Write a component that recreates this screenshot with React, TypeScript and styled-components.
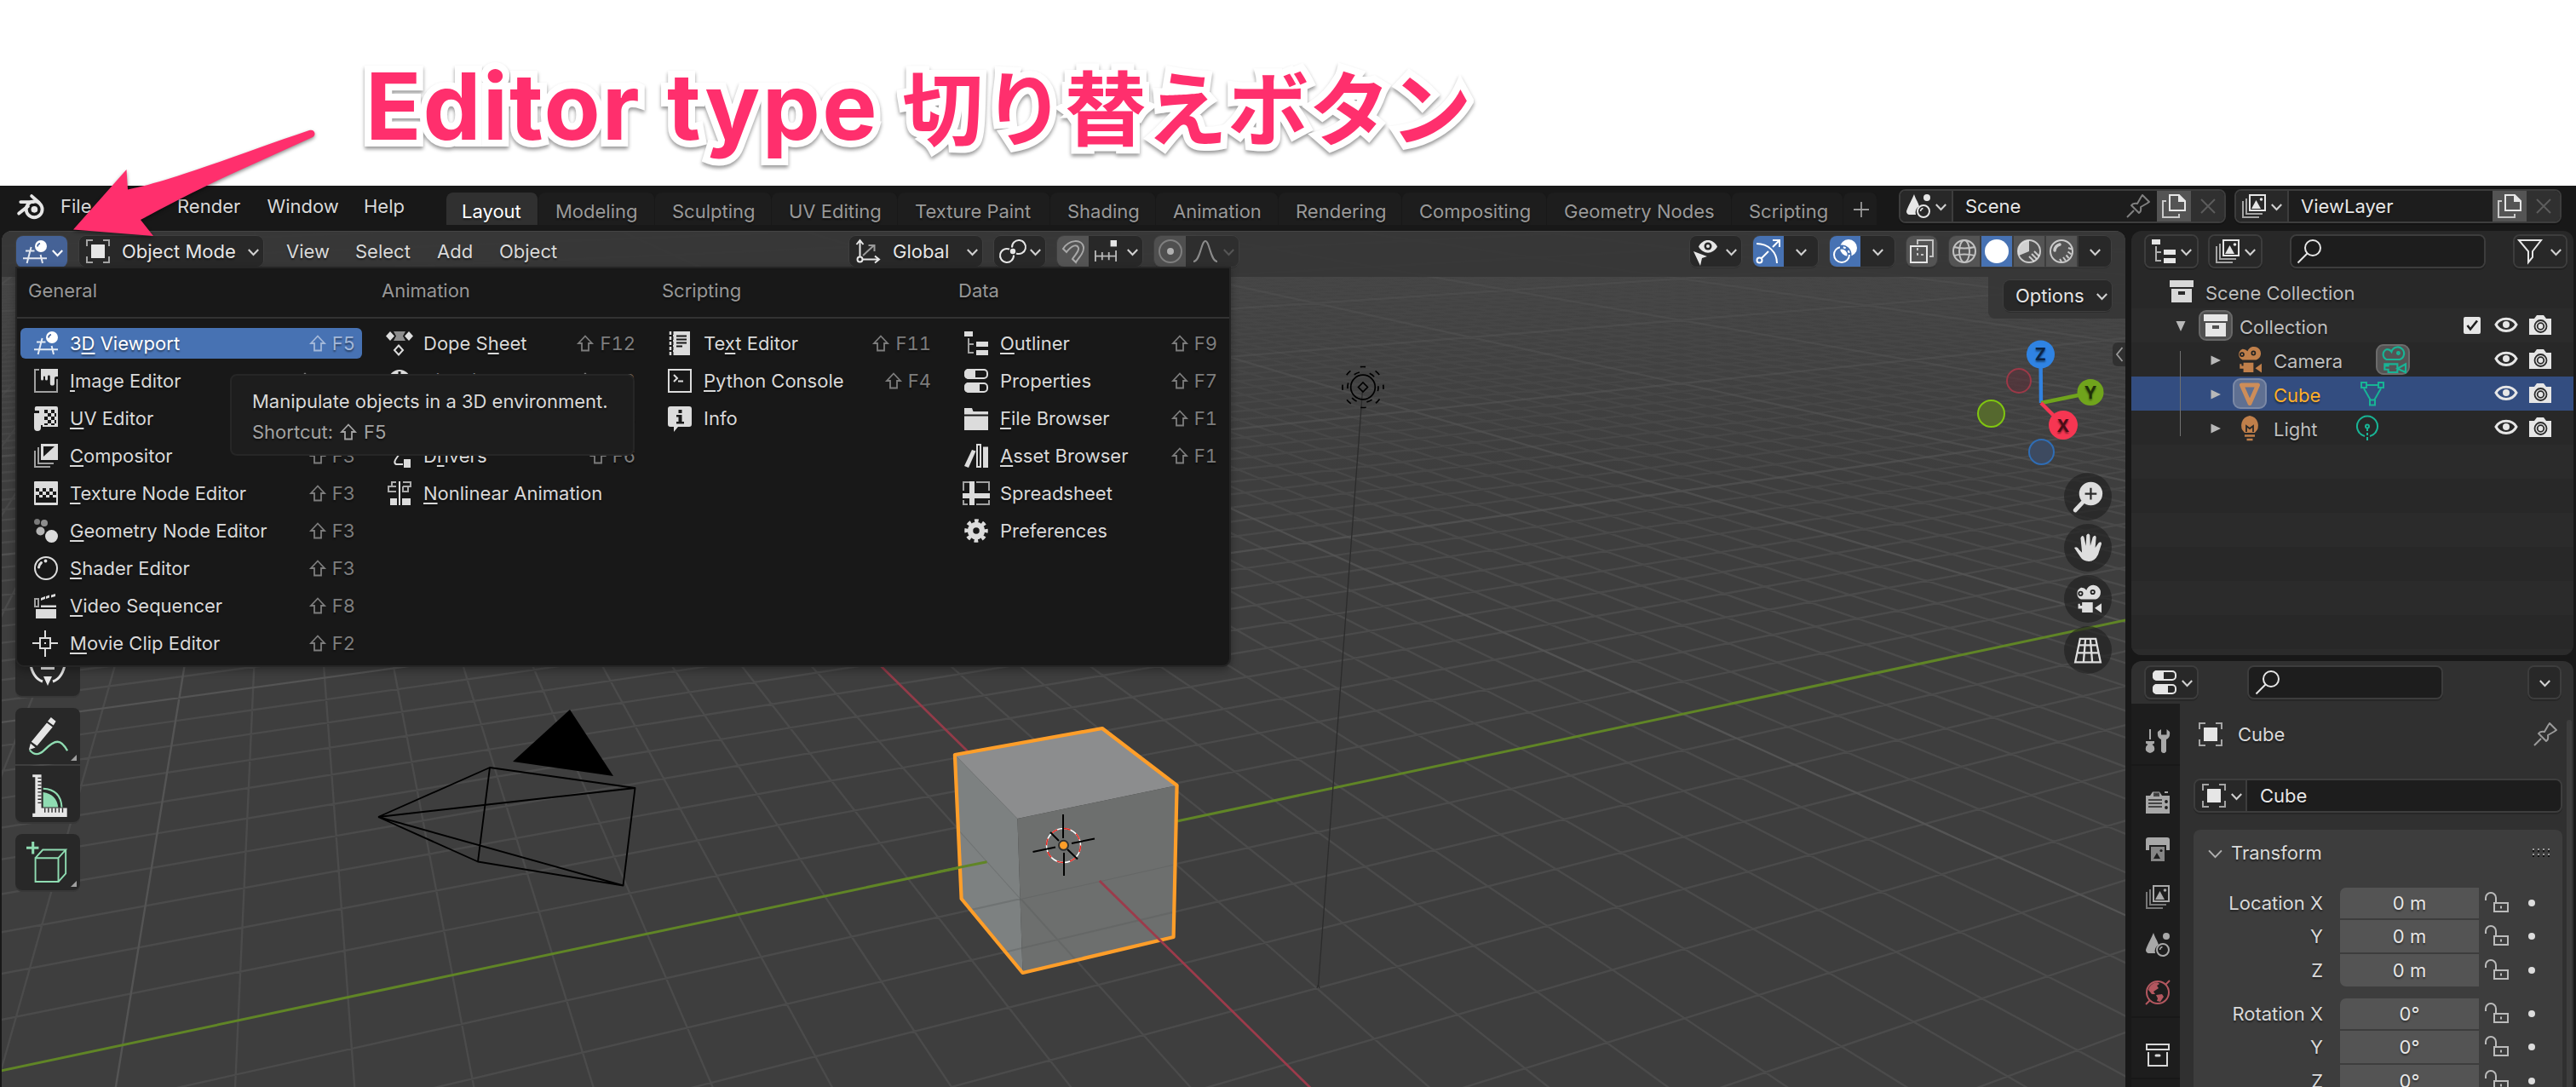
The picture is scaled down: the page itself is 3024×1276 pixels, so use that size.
import React from "react";
import styled, { createGlobalStyle, css } from "styled-components";

const Global = createGlobalStyle`
  *, *::before, *::after { box-sizing: border-box; }
  html, body { margin: 0; padding: 0; background: #fff; overflow: hidden; }
  body { font-family: Inter, "Noto Sans CJK JP", sans-serif; font-size: 22px; color: #d9d9d9; }
`;

/* ------------------------------------------------------------------ icons */

const S = { fill: "none", stroke: "currentColor", strokeWidth: 2 } as const;

const glyphs: Record<string, React.ReactNode> = {
  blender: (
    <g>
      <path d="M2 21 L12 13.2 M4 8.5 H18" stroke="currentColor" strokeWidth="3.6" strokeLinecap="round" fill="none" />
      <path d="M16 2 L24 9" stroke="currentColor" strokeWidth="3.6" strokeLinecap="round" fill="none" />
      <circle cx="18.8" cy="16.6" r="8.8" fill="none" stroke="currentColor" strokeWidth="3.6" />
      <circle cx="19" cy="16.6" r="3.6" fill="currentColor" />
    </g>
  ),
  view3d: (
    <g>
      <path d="M0 21.3H28M3 12.6H13.5M9.6 8L4.6 27M20.6 17L23 27" {...S} opacity="0.85" />
      <circle cx="21" cy="7" r="7" fill="currentColor" />
      <path d="M17 7.5a4 4 0 0 1 3-3.7" fill="none" stroke="#3d5f9b" strokeWidth="1.6" />
    </g>
  ),
  image: (
    <g fill="currentColor">
      <path d="M6 1H1V27H27V12" {...S} opacity="0.7" />
      <path d="M8 0H28V9h-2a2 2 0 0 0-2 2v6a2.6 2.6 0 0 1-5.2 0V9a1.4 1.4 0 0 0-2.800 0v3a1.5 1.5 0 0 1-3 0V9a1.500 1.500 0 0 0-2 0v3a1.500 1.500 0 0 1-3 0z" />
    </g>
  ),
  uv: (
    <g fill="currentColor">
      <path d="M3 0H26a2 2 0 0 1 2 2V24H10V22H8V25a3 3 0 0 1-8 0V8H6V5H1Q0 0 3 0z" />
      <path d="M12 4h4v4h-4zM20 4h4v4h-4zM16 8h4v4h-4zM24 8h2v4h-2zM12 12h4v4h-4zM20 12h4v4h-4zM16 16h4v4h-4zM24 16h2v4h-2zM12 20h4v2h-4zM20 20h4v2h-4z" fill="#181818" />
    </g>
  ),
  compositor: (
    <g>
      <path d="M1 8V27H19M5 4V23H23" {...S} opacity="0.7" />
      <path d="M8 0H28V19H8z" fill="currentColor" />
      <path d="M11 3H24L11 15z" fill="#181818" />
    </g>
  ),
  texture: (
    <g>
      <rect width="28" height="28" rx="1" fill="currentColor" />
      <path d="M2 8h4v4H2zM10 8h4v4h-4zM18 8h4v4h-4zM6 12h4v4H6zM14 12h4v4h-4zM22 12h4v4h-4zM2 16h4v2H2zM10 16h4v2h-4zM18 16h4v2h-4zM2 18h24v7H2z" fill="#181818" />
      <path d="M6 16h4v3H6zM14 16h4v3h-4zM22 16h4v3h-4z" fill="currentColor" />
    </g>
  ),
  geonodes: (
    <g fill="currentColor">
      <circle cx="3.500" cy="3.500" r="3.500" opacity="0.5" />
      <circle cx="12" cy="5" r="4" opacity="0.6" />
      <circle cx="7.500" cy="14.500" r="5" opacity="0.8" />
      <circle cx="20.500" cy="20.500" r="7.500" />
    </g>
  ),
  shader: (
    <g>
      <circle cx="14" cy="14" r="13" {...S} />
      <path d="M5.500 13a9 9 0 0 1 3-5.500" {...S} strokeWidth="3" strokeLinecap="round" />
      <circle cx="13.500" cy="5.500" r="1.900" fill="currentColor" />
    </g>
  ),
  video: (
    <g fill="currentColor">
      <rect x="1" y="6" width="4" height="9" {...S} opacity="0.7" />
      <path d="M8 5l5-2v3l-5 2zM14 3l4-1.500v3L14 6zM20 1.500L25 0v3l-5 1.500zM8 13.500h18v2.500H8zM2 18h24v11H2z" />
    </g>
  ),
  clip: (
    <g {...S}>
      <path d="M-2 14H7M19 14H28M13 -1V7M13 21V30" />
      <rect x="7" y="8" width="12" height="12" />
      <rect x="12" y="13" width="2" height="2" fill="currentColor" stroke="none" />
    </g>
  ),
  dope: (
    <g fill="currentColor">
      <path d="M3 0l5 5.500-5 5.500-5-5.500zM25 0l5 5.500-5 5.500-5-5.500z" />
      <path d="M7 0h14l-3 5.500 3 5.500H7l3-5.500z" opacity="0.6" />
      <path d="M13 16.500l5 5.500-5 5.500-5-5.500z" {...S} />
    </g>
  ),
  timeline: (
    <g>
      <circle cx="14" cy="14" r="13" fill="currentColor" />
      <path d="M14 3v11l6-6" fill="none" stroke="#181818" strokeWidth="3" />
    </g>
  ),
  drivers: (
    <g>
      <path d="M4 1C12 1 18 5 14 12C10 17 6 22 10 24H18" {...S} />
      <rect x="19" y="18" width="8" height="10" fill="currentColor" />
    </g>
  ),
  nla: (
    <g>
      <path d="M10 1H5V6M10 6H1V12H10M18 1H27V6H18M18 6V12H24V6" {...S} opacity="0.75" />
      <path d="M14 0V28" {...S} />
      <path d="M3 20h8v8H3zM17 20h10v8H17z" fill="currentColor" />
    </g>
  ),
  text: (
    <g>
      <path d="M6 0H26V28H6z" fill="currentColor" />
      <path d="M3 0V28" stroke="currentColor" strokeWidth="2.500" strokeDasharray="4 2" />
      <path d="M6 0V28" stroke="#181818" strokeWidth="1" strokeDasharray="4 2" />
      <path d="M10 5.500H22M10 9.500H22M10 13.500H22M10 17.500H17" stroke="#181818" strokeWidth="2" />
    </g>
  ),
  console: (
    <g {...S}>
      <rect x="1" y="1" width="26" height="26" />
      <path d="M7 7l4 4-4 4M12 14.500h6" />
    </g>
  ),
  info: (
    <g>
      <path d="M3 0H25a3 3 0 0 1 3 3V21a3 3 0 0 1-3 3H12L7 30V24H3a3 3 0 0 1-3-3V3a3 3 0 0 1 3-3z" fill="currentColor" />
      <path d="M12.500 4h4v4h-4zM10 10h6.500v8H19v2.500H10V18h2.500v-5.500H10z" fill="#181818" />
    </g>
  ),
  outliner: (
    <g>
      <path d="M0 0h10v6H0zM14 12h14v6H14zM14 22h14v6H14z" fill="currentColor" />
      <path d="M5 8V25H11M5 15H11" {...S} opacity="0.7" />
    </g>
  ),
  properties: (
    <g>
      <rect x="1" y="1" width="26" height="10" rx="4" {...S} />
      <path d="M5 0H13V12H5a5 5 0 0 1-5-5V5a5 5 0 0 1 5-5z" fill="currentColor" />
      <rect x="1" y="17" width="26" height="10" rx="4" {...S} />
      <path d="M5 16H18V28H5a5 5 0 0 1-5-5V21a5 5 0 0 1 5-5z" fill="currentColor" />
    </g>
  ),
  file: <path d="M0 2H9l1.500 4H28V9.500H0zM0 11.500H28V28H0z" fill="currentColor" />,
  asset: (
    <g fill="currentColor">
      <path d="M9 7l4.500 1.500L5 28 0 26z" />
      <path d="M15 1h4v26h-4z" {...S} />
      <path d="M22 3.500h6V28h-6z" />
    </g>
  ),
  sheet: (
    <g>
      <path d="M-1 11V1H6M14 1H29V11M-1 22V27H4M14 27H29V22" {...S} opacity="0.7" />
      <path d="M6 0h6v28H6zM-2 14H30v6H-2z" fill="currentColor" />
    </g>
  ),
  prefs: (
    <g>
      <circle cx="14" cy="14" r="7" fill="none" stroke="currentColor" strokeWidth="6.500" />
      <circle cx="14" cy="14" r="11.500" fill="none" stroke="currentColor" strokeWidth="4.500" strokeDasharray="4.600 4.430" strokeDashoffset="2.300" />
    </g>
  ),
  object: (
    <g>
      <path d="M1 8V1H8M20 1H27V8M27 20V27H20M8 27H1V20" {...S} opacity="0.65" />
      <rect x="6" y="6" width="16" height="16" rx="0.500" fill="currentColor" />
    </g>
  ),
  orient: (
    <g {...S}>
      <path d="M4.500 20V1M0.500 6l4-5 4 5M8 23.500H27M22 19.500l5 4-5 4" />
      <circle cx="4.500" cy="23.500" r="3" />
      <path d="M8 19L21 7M14.500 7H21.500V14" opacity="0.6" />
    </g>
  ),
  pivot: (
    <g {...S}>
      <path d="M13 9.500a8 8 0 1 1 5 7" />
      <path d="M15 18.500a8 8 0 1 1-5-7" />
      <circle cx="14" cy="14" r="2.200" fill="currentColor" />
    </g>
  ),
  magnet: <path d="M2 11C9 0 24-1 26 9C27 17 20 21 17 27L13 23C16 18 21 14 20 10C18 5 12 7 6 15z" {...S} />,
  snapinc: (
    <g {...S}>
      <path d="M1 13V27M27 13V27M9.500 15V25M18 15V25M1 20H27" opacity="0.75" />
      <rect x="20" y="0" width="8" height="8" fill="currentColor" stroke="none" />
    </g>
  ),
  propedit: (
    <g>
      <circle cx="14" cy="14" r="13" {...S} opacity="0.5" />
      <circle cx="14" cy="14" r="4" fill="currentColor" />
    </g>
  ),
  falloff: <path d="M0 26C8 26 9 2 14 2S20 26 28 26" {...S} />,
  eyecursor: (
    <g>
      <path d="M6 8.500C11-1.500 23-1.500 28 8.500C23 18 11 18 6 8.500z" fill="currentColor" />
      <circle cx="17" cy="8" r="4.500" fill="#282828" />
      <circle cx="17" cy="8" r="2" fill="currentColor" />
      <path d="M0 14L16 20 10 22 8 31z" fill="currentColor" />
    </g>
  ),
  gizmo: (
    <g {...S}>
      <path d="M0 5C14 5 24 15 24 28M6 22L14 14M19 9L27 1M19 1H27V9" />
      <circle cx="3.500" cy="24.500" r="3" />
    </g>
  ),
  overlay: (
    <g>
      <circle cx="18" cy="10" r="10" fill="currentColor" />
      <circle cx="10" cy="18" r="9" fill="none" stroke="#4772b3" strokeWidth="5" />
      <circle cx="10" cy="18" r="9" {...S} strokeDasharray="40 4 3 4 3 4" />
    </g>
  ),
  xray: (
    <g {...S}>
      <path d="M9 6V1H27V20H23" opacity="0.75" />
      <rect x="1" y="8" width="19" height="19" />
      <path d="M9 10V18H18" strokeDasharray="3 3" strokeWidth="1.500" />
    </g>
  ),
  wire: (
    <g {...S} opacity="0.75">
      <circle cx="14" cy="14" r="13" />
      <ellipse cx="14" cy="14" rx="6" ry="13" />
      <path d="M2 9C10 11 18 11 26 9M2 19C10 17 18 17 26 19" />
    </g>
  ),
  solid: <circle cx="14" cy="14" r="14" fill="currentColor" />,
  material: (
    <g>
      <circle cx="14" cy="14" r="13" {...S} opacity="0.8" />
      <path d="M14 14V1A13 13 0 0 0 1 14q0 3 1 5z" fill="currentColor" opacity="0.85" />
      <path d="M14 20l6 6M17 17l6 6M20 14l6 6" {...S} opacity="0.8" />
    </g>
  ),
  rendered: (
    <g {...S} opacity="0.8">
      <circle cx="14" cy="14" r="13" />
      <path d="M6 13a8 8 0 0 1 6-7" strokeWidth="3.500" strokeLinecap="round" />
      <path d="M12 23l2 3M16 21l3 4M19.500 18.500l3 3.500M21.500 14.500l4 3M22 10l4 1.500" />
    </g>
  ),
  scene: (
    <g fill="currentColor">
      <path d="M9 0C10 4 14 10 15 14A9 9 0 0 0 11 24H3Q0 23 0 20C2 14 7 5 9 0z" />
      <circle cx="24" cy="4" r="4" />
      <circle cx="20" cy="20" r="7" {...S} />
      <path d="M16.500 20a4 4 0 0 1 3-3.500" {...S} strokeWidth="1.500" />
    </g>
  ),
  viewlayer: (
    <g>
      <path d="M1 8V27H20M5 5V23H24" {...S} opacity="0.65" />
      <rect x="9" y="1" width="18" height="18" {...S} />
      <path d="M11 17L16.500 7 22 17z" fill="currentColor" />
      <circle cx="22.500" cy="6" r="1.800" fill="currentColor" />
    </g>
  ),
  pin: <path d="M1 27L9 19M6 13L15 22Q18 20 17 15L24 11 27 9 19 1 17 4 13 11Q8 10 6 13z" {...S} strokeLinejoin="round" />,
  copy: (
    <g>
      <path d="M5 8H1V27H20V23" {...S} opacity="0.8" />
      <path d="M9 1H20L27 8V19H9z" {...S} />
      <path d="M19 0V9H28z" fill="currentColor" />
    </g>
  ),
  close: <path d="M6 6L22 22M22 6L6 22" {...S} />,
  search: (
    <g {...S}>
      <circle cx="18" cy="10" r="9" />
      <path d="M11.500 16.500L0.500 27.500" />
    </g>
  ),
  filter: <path d="M1 1H27L17 14V21L12 27V14z" {...S} />,
  archive: (
    <g fill="currentColor">
      <path d="M0 1H28V9H0z" />
      <path d="M2 11H26V27H2zM10 14v4h8v-4z" fillRule="evenodd" />
    </g>
  ),
  archiveline: (
    <g {...S}>
      <rect x="1" y="2" width="26" height="6" />
      <path d="M3 11V27H25V11" />
      <rect x="10.500" y="13.500" width="7" height="3" rx="1.500" fill="currentColor" stroke="none" />
    </g>
  ),
  check: (
    <g>
      <rect x="4" y="4" width="20" height="20" rx="2" fill="currentColor" />
      <path d="M8.500 14l3.500 4.500L20 8.500" fill="none" stroke="#1d1d1d" strokeWidth="2.600" />
    </g>
  ),
  eye: (
    <g>
      <path d="M2 13C7 4 21 4 26 13C21 23 7 23 2 13z" {...S} strokeWidth="3" />
      <circle cx="14" cy="13" r="4" fill="currentColor" />
    </g>
  ),
  photo: (
    <g>
      <path d="M1 6H7L10 2H18L21 6H27V25H1z" fill="currentColor" />
      <circle cx="14.500" cy="15" r="7" fill="none" stroke="#2b2b2b" strokeWidth="1.800" />
      <circle cx="14.500" cy="15" r="3.800" fill="none" stroke="#2b2b2b" strokeWidth="1.800" />
    </g>
  ),
  movie: (
    <g>
      <path d="M7 4a6.500 6.500 0 0 0 0 12H22a7.500 7.500 0 1 0-9.500-9.500A6.500 6.500 0 0 0 7 4z" fill="currentColor" transform="translate(0 -1.500)" />
      <circle cx="6.500" cy="8.500" r="1.900" fill="none" stroke="#222" strokeWidth="1.600" />
      <circle cx="19" cy="7" r="1.900" fill="none" stroke="#222" strokeWidth="1.600" />
      <path d="M4 19h2v2h2v-3.500H19V28H8v-4H4zM21 23.500l7-5v10z" fill="currentColor" />
    </g>
  ),
  movieline: (
    <g {...S}>
      <path d="M7 4.500a6 6 0 0 0 0 11H21.500a7 7 0 1 0-9-8.500A6 6 0 0 0 7 4.500z" transform="translate(0 -1.500)" />
      <circle cx="20" cy="7" r="1.300" />
      <path d="M9 19H19V28H9V25H5V19H7V21H9zM19 24L28 19V28z" />
    </g>
  ),
  mesh: <path d="M4.500 4H23.500L14 25.500z" fill="none" stroke="currentColor" strokeWidth="5" strokeLinejoin="round" />,
  meshdata: (
    <g {...S}>
      <path d="M6 4H22M4 8L12 22M24 8L16 22" />
      <rect x="1" y="1" width="6" height="6" />
      <rect x="21" y="1" width="6" height="6" />
      <rect x="11" y="21.500" width="6" height="6" />
    </g>
  ),
  bulb: (
    <g>
      <path d="M14 0A11.500 11.500 0 0 1 20 20H8A11.500 11.500 0 0 1 14 0z" fill="currentColor" />
      <path d="M10 19V12l4 3 4-3v7" fill="none" stroke="#282828" strokeWidth="1.800" />
      <path d="M8 23.500H20M10.500 28H17.500" stroke="currentColor" strokeWidth="2.600" />
    </g>
  ),
  lightdata: (
    <g {...S}>
      <path d="M11 24A12 12 0 1 1 17 24" />
      <circle cx="14" cy="12.500" r="2" />
      <path d="M14 14.500V18M14 20V23M14 25V29" />
    </g>
  ),
  tool: (
    <g fill="currentColor">
      <path d="M4 0h2v12H4zM0 14h10v2.500L7.500 18Q11 20 10 25 5 31 0 25-1 20 2.500 18L0 16.500z" />
      <path d="M14 3Q13 10 18 12V26a3.200 3.200 0 0 0 6 0V12Q29 10 28 3L24.500 0V6.500H18V0z" />
    </g>
  ),
  renderprop: (
    <g>
      <path d="M0 7H5L8 2.500H16L19 7H28V28H0z" fill="currentColor" />
      <path d="M10 4.500h5v2.500h-5zM3 12H19M3 16H19M3 20H19" stroke="#444" strokeWidth="2" fill="#1d1d1d" />
      <circle cx="24" cy="14" r="1.900" fill="#1d1d1d" />
      <circle cx="24" cy="21" r="1.900" fill="#1d1d1d" />
      <path d="M22 3h4" stroke="currentColor" strokeWidth="2" />
    </g>
  ),
  output: (
    <g>
      <path d="M3 0H25a3 3 0 0 1 3 3V15H24V9H4V15H0V3a3 3 0 0 1 3-3z" fill="currentColor" />
      <path d="M6 11H22V28H6z" fill="currentColor" opacity="0.75" />
      <path d="M9 25L13 18l4 7z" fill="#1d1d1d" />
      <circle cx="18" cy="15.500" r="1.600" fill="#1d1d1d" />
    </g>
  ),
  world: (
    <g>
      <circle cx="14" cy="14" r="13" {...S} />
      <path d="M23 5l5-5M0 28l5-5" {...S} />
      <path d="M4 8C8 2 14 1 16 4L13 6 15 9 9 13 11 16 7 16 3 11zM12 17L19 16 21 19 17 25 13 24 14 21z" fill="currentColor" />
    </g>
  ),
  lock: (
    <g {...S} opacity="0.75">
      <path d="M1 11V8a6 6 0 0 1 12 0V14" />
      <rect x="11" y="14" width="16" height="10" />
      <path d="M19 17.500v3" />
    </g>
  ),
  dots: (
    <g>
      {[0, 6, 12, 18].map((x) => (
        <g key={x}>
          <path d={`M${x + 4} 9h2v2h-2zM${x + 4} 15h2v2h-2z`} fill="#999" />
          <path d={`M${x + 4} 11h2v2h-2zM${x + 4} 17h2v2h-2z`} fill="#111" />
        </g>
      ))}
    </g>
  ),
  zoomin: (
    <g>
      <circle cx="17" cy="11" r="12" fill="currentColor" />
      <path d="M17 5V17M11 11H23" stroke="#2c2c2c" strokeWidth="2" />
      <path d="M9.500 19L1 28" stroke="currentColor" strokeWidth="4.200" strokeLinecap="round" />
    </g>
  ),
  hand: (
    <path
      d="M0 14Q3 12 5 16L8 19 6.500 4Q8 0 10 3L12 12 12.500 1Q14.500-2 16 1L16.500 12 19 3Q21.500 0 22.500 3L21.500 14 25 9Q28 7 28 10L24.500 21Q21 28 15 28 9 28 6 23z"
      fill="currentColor"
    />
  ),
  persp: <path d="M6 2.500H22L27 26.500H1zM4.500 9H23.500M3 17H25M11.500 2.500L9.500 26.500M16.500 2.500L18.500 26.500" fill="none" stroke="currentColor" strokeWidth="2" />,
  pen: (
    <g>
      <path d="M30 3L36 8 33 13 26 8zM25 10L32 15 13 38 6 33zM5 35L11 40 3 43z" fill="#e6e6e6" />
      <path d="M4 43Q12 53 22 43T38 33Q44 33 50 44" fill="none" stroke="#8fdcb2" strokeWidth="2.400" />
    </g>
  ),
  measure: (
    <g transform="translate(1 2)">
      <path d="M4 2H14V40H43V50H4V46H7V5H4z" fill="#e6e6e6" />
      <path d="M14 6h-4M14 10h-4M14 14h-4M14 18h-4M14 22h-4M14 26h-4M14 30h-4M14 34h-4M18 40v5M22 40v5M26 40v5M30 40v5M34 40v5M38 40v5" stroke="#282828" strokeWidth="1.300" />
      <path d="M16 22Q31 24 33 39H16z" fill="#8fdcb2" />
      <path d="M16 18Q36 19 37 39" fill="none" stroke="#8fdcb2" strokeWidth="2" />
    </g>
  ),
  addcube: (
    <g fill="none" stroke="#8fdcb2" strokeWidth="2">
      <path d="M8 1V16M0 8.500H15" strokeWidth="3.200" />
      <path d="M11 21H39V50H11zM11 21L20 11H48L39 21M48 11V40L39 50" />
    </g>
  ),
  transform: (
    <g>
      <rect x="18" y="14" width="16" height="14" fill="#e6e6e6" />
      <path d="M5 18Q8 38 20 42M47 18Q44 38 32 42" fill="none" stroke="#e6e6e6" strokeWidth="3" />
      <path d="M21 36H31L26 47zM4 14l7 2-3 6zM48 14l-7 2 3 6z" fill="#e6e6e6" />
    </g>
  ),
};

const IconSvg = styled.svg<{ $c?: string; $ml?: number; $mt?: number }>`
  display: block;
  flex: none;
  overflow: visible;
  color: ${(p) => p.$c ?? "#e6e6e6"};
  margin-left: ${(p) => p.$ml ?? 0}px;
  margin-top: ${(p) => p.$mt ?? 0}px;
`;

function Icon({ n, s = 28, box = 28, c, ml }: { n: string; s?: number; box?: number; c?: string; ml?: number }) {
  return (
    <IconSvg width={s} height={s} viewBox={`0 0 ${box} ${box}`} $c={c} $ml={ml}>
      {glyphs[n]}
    </IconSvg>
  );
}

function Chevron({ w = 13, ml = 0, c = "#d0d0d0" }: { w?: number; ml?: number; c?: string }) {
  return (
    <IconSvg width={w} height={(w * 8) / 13} viewBox="0 0 13 8" $c={c} $ml={ml} $mt={2}>
      <path d="M0.800 1L6.500 7 12.200 1" {...S} strokeWidth={w > 13 ? 1.5 : 2.1} />
    </IconSvg>
  );
}

/* ------------------------------------------------------- window structure */

const Page = styled.div`
  position: relative;
  width: 3024px;
  height: 1276px;
  overflow: hidden;
  background: #fff;
`;

const Caption = styled.header`
  display: flex;
  align-items: baseline;
  height: 218px;
  padding: 53px 0 0 429px;
`;

const Word = styled.span<{ $size: number; $w: number; $track?: number; $jp?: boolean }>`
  flex: none;
  width: ${(p) => p.$w}px;
  white-space: nowrap;
  font-family: ${(p) => (p.$jp ? '"Noto Sans CJK JP", Inter' : 'Inter, "Noto Sans CJK JP"')}, sans-serif;
  font-weight: 700;
  font-size: ${(p) => p.$size}px;
  line-height: 140px;
  letter-spacing: ${(p) => p.$track ?? 0}px;
  color: #ff2f6d;
  -webkit-text-stroke: 16px #fff;
  paint-order: stroke fill;
  stroke-linejoin: round;
  filter: drop-shadow(0 3px 2px rgba(0, 0, 0, 0.4));
`;

const ArrowLayer = styled.svg`
  position: absolute;
  left: 0;
  top: 0;
  z-index: 20;
  filter: drop-shadow(0 2px 2px rgba(0, 0, 0, 0.45));
`;

const Window = styled.main`
  display: flex;
  flex-direction: column;
  height: 1058px;
  background: #181818;
  text-shadow: 0 2px 2px rgba(0, 0, 0, 0.45);
`;

const TopBar = styled.nav`
  display: flex;
  align-items: flex-start;
  height: 53px;
  flex: none;
`;

const Logo = styled.div`
  width: 71px;
  padding: 10px 0 0 20px;
`;

const MenuWord = styled.span<{ $w: number }>`
  width: ${(p) => p.$w}px;
  flex: none;
  line-height: 48px;
  white-space: nowrap;
`;

const Tab = styled.div<{ $w: number; $active?: boolean }>`
  width: ${(p) => p.$w}px;
  flex: none;
  height: 38px;
  margin-top: 8px;
  padding: 3px 0 0 ${(p) => (p.$active ? 18 : 20)}px;
  line-height: 38px;
  white-space: nowrap;
  border-radius: 8px 8px 0 0;
  border-right: 1px solid #181818;
  color: ${(p) => (p.$active ? "#fff" : "#999")};
  background: ${(p) => (p.$active ? "#303030" : "#1d1d1d")};
`;

const Body = styled.div`
  display: flex;
  flex: 1;
  gap: 7px;
  padding-left: 2px;
`;

/* shared control shell */
const Group = styled.div<{ $ml?: number; $h?: number; $mt?: number; $line?: boolean }>`
  display: flex;
  flex: none;
  overflow: hidden;
  height: ${(p) => p.$h ?? 36}px;
  margin-left: ${(p) => p.$ml ?? 0}px;
  margin-top: ${(p) => p.$mt ?? 0}px;
  border-radius: 8px;
  box-shadow: 0 0 0 ${(p) => (p.$line ? 0 : 1)}px #3f3f3f, 0 2px 0 rgba(0, 0, 0, 0.18);
  ${(p) => p.$line && css`border: 2px solid #3d3d3d;`}
`;

const Seg = styled.div<{ $w: number; $bg?: string; $pad?: number; $center?: boolean; $sep?: boolean; $fg?: string }>`
  display: flex;
  align-items: center;
  justify-content: ${(p) => (p.$center ? "center" : "flex-start")};
  flex: none;
  width: ${(p) => p.$w}px;
  padding-left: ${(p) => p.$pad ?? 0}px;
  background: ${(p) => p.$bg ?? "#282828"};
  color: ${(p) => p.$fg ?? "#e6e6e6"};
  white-space: nowrap;
  ${(p) => p.$sep && css`border-right: 2px solid #3d3d3d;`}
`;

const Txt = styled.span<{ $w: number; $ml?: number }>`
  flex: none;
  width: ${(p) => p.$w}px;
  margin-left: ${(p) => p.$ml ?? 0}px;
  white-space: nowrap;
`;

/* ---------------------------------------------------------------- viewport */

const ViewportArea = styled.section`
  position: relative;
  width: 2493px;
  flex: none;
  overflow: hidden;
  border-radius: 12px 12px 0 0;
  background: #3d3d3d;
`;

const SceneSvg = styled.svg`
  position: absolute;
  inset: 0;
`;

const ViewHeader = styled.div`
  position: relative;
  display: flex;
  align-items: flex-start;
  height: 54px;
  padding: 5px 0 0 17px;
  background: rgba(54, 54, 54, 0.88);
  border-top: 1px solid #444;
`;

const HeaderWord = styled.span<{ $w: number }>`
  width: ${(p) => p.$w}px;
  flex: none;
  line-height: 36px;
`;

const OptionsWrap = styled.div`
  position: relative;
  display: flex;
  width: 161px;
  height: 49px;
  margin-left: auto;
  padding: 4px 0 0 18px;
  background: rgba(54, 54, 54, 0.88);
  border-radius: 0 0 0 8px;
`;

const Toolbar = styled.div`
  position: absolute;
  left: 16px;
  top: 480px;
  width: 76px;
  display: flex;
  flex-direction: column;
  gap: 14px;
`;

const ToolGroup = styled.div`
  display: flex;
  flex-direction: column;
  gap: 2px;
  border-radius: 8px;
  overflow: hidden;
  box-shadow: 0 2px 0 #383838;
`;

const ToolButton = styled.div<{ $more?: boolean }>`
  position: relative;
  display: flex;
  justify-content: center;
  align-items: center;
  height: 66px;
  background: #282828;
  &::after {
    content: "";
    display: ${(p) => (p.$more ? "block" : "none")};
    position: absolute;
    right: 4px;
    bottom: 4px;
    border-left: 7px solid transparent;
    border-bottom: 7px solid #a0a0a0;
  }
`;

const NavStack = styled.div`
  position: absolute;
  left: 2421px;
  top: 284px;
  display: flex;
  flex-direction: column;
  gap: 4px;
`;

const NavButton = styled.div`
  display: flex;
  align-items: center;
  justify-content: center;
  width: 56px;
  height: 56px;
  border-radius: 50%;
  background: rgba(30, 30, 30, 0.62);
`;

const SideTab = styled.div`
  position: absolute;
  right: 0;
  top: 131px;
  width: 15px;
  height: 28px;
  border-radius: 6px 0 0 6px;
  background: #303030;
  display: flex;
  align-items: center;
  padding-left: 3px;
`;

/* ground plane projection for the default perspective view */
const TH = (65.08 * Math.PI) / 180;
const PH = (62.85 * Math.PI) / 180;
const FOCAL = 1760;
const DIST = 18.2;

function project(x: number, y: number, z = 0): [number, number] {
  const r = x * Math.cos(TH) + y * Math.sin(TH);
  const u = -x * Math.cos(PH) * Math.sin(TH) + y * Math.cos(PH) * Math.cos(TH) + z * Math.sin(PH);
  const b = x * Math.sin(PH) * Math.sin(TH) - y * Math.sin(PH) * Math.cos(TH) + z * Math.cos(PH);
  const k = FOCAL / (DIST - b);
  return [1248.5 + r * k, 992.3 - u * k];
}

const fmt = (p: [number, number]) => `${p[0].toFixed(1)} ${p[1].toFixed(1)}`;
const DX = Math.sin(PH) * Math.sin(TH);
const DY = Math.sin(PH) * Math.cos(TH);

function gridPath(extent: number, step: number, keep: (i: number) => boolean) {
  let d = "";
  for (let i = -extent; i <= extent; i += step) {
    if (!keep(i)) continue;
    const yMin = Math.max(-extent, (2 - DIST + DX * i) / DY);
    if (yMin < extent) d += `M${fmt(project(i, yMin))}L${fmt(project(i, extent))}`;
    const xMax = Math.min(extent, (DIST + DY * i - 2) / DX);
    if (xMax > -extent) d += `M${fmt(project(-extent, i))}L${fmt(project(xMax, i))}`;
  }
  return d;
}

const MINOR = gridPath(110, 1, (i) => i % 10 !== 0);
const MAJOR = gridPath(400, 10, (i) => i !== 0);
const SUNK = [project(-1, -1), project(1, -1), project(1, 1), project(1, 1, -1), project(1, -1, -1), project(-1, -1, -1)]
  .map((p) => p.join(","))
  .join(" ");

function SceneDrawing() {
  return (
    <SceneSvg width="2493" height="1005" viewBox="2 271 2493 1005">
      <defs>
        <linearGradient id="fade" x1="0" y1="271" x2="0" y2="700" gradientUnits="userSpaceOnUse">
          <stop offset="0" stopColor="#fff" stopOpacity="0.25" />
          <stop offset="0.350" stopColor="#fff" stopOpacity="0.5" />
          <stop offset="1" stopColor="#fff" stopOpacity="1" />
        </linearGradient>
        <linearGradient id="fadeMajor" x1="0" y1="271" x2="0" y2="800" gradientUnits="userSpaceOnUse">
          <stop offset="0" stopColor="#fff" stopOpacity="0.35" />
          <stop offset="1" stopColor="#fff" stopOpacity="1" />
        </linearGradient>
        <linearGradient id="haze" x1="0" y1="271" x2="0" y2="560" gradientUnits="userSpaceOnUse">
          <stop offset="0" stopColor="#454545" />
          <stop offset="1" stopColor="#3e3e3e" />
        </linearGradient>
        <mask id="minorMask" maskUnits="userSpaceOnUse" x="0" y="271" width="2500" height="1010">
          <rect x="0" y="271" width="2500" height="1010" fill="url(#fade)" />
        </mask>
        <mask id="majorMask" maskUnits="userSpaceOnUse" x="0" y="271" width="2500" height="1010">
          <rect x="0" y="271" width="2500" height="1010" fill="url(#fadeMajor)" />
        </mask>
        <clipPath id="sunk">
          <polygon points={SUNK} />
        </clipPath>
      </defs>
      <rect x="2" y="271" width="2493" height="1005" fill="url(#haze)" />
      <g mask="url(#minorMask)">
        <path d={MINOR} stroke="#4b4b4b" strokeWidth="2.400" fill="none" />
      </g>
      <g mask="url(#majorMask)">
        <path d={MAJOR} stroke="#545454" strokeWidth="2.400" fill="none" />
      </g>
      <path d={`M${fmt(project(0, -16))}L1158.500 1011.700M1381.600 964L${fmt(project(0, 60))}`} stroke="#608526" strokeWidth="3" />
      <path d={`M${fmt(project(-60, 0))}L1136 882`} stroke="#933b49" strokeWidth="2.800" />

      {/* cube */}
      <polygon points="1120.900,886 1293.900,855 1381.600,922 1194.400,961" fill="#8c8d8e" />
      <polygon points="1120.900,886 1194.400,961 1200.500,1142 1128.600,1055" fill="#7d8181" />
      <polygon points="1194.400,961 1381.600,922 1377.600,1100 1200.500,1142" fill="#6d6f6e" />
      <g clipPath="url(#sunk)">
        <path d={MINOR} stroke="#555858" strokeOpacity="0.350" strokeWidth="2" fill="none" />
      </g>
      <polygon
        points="1120.900,886 1293.900,855 1381.600,922 1377.600,1100 1200.500,1142 1128.600,1055"
        fill="none"
        stroke="#ff9e29"
        strokeWidth="4.200"
        strokeLinejoin="round"
      />
      <path d="M1100 1023.600L1158.500 1011.700" stroke="#608526" strokeWidth="3" />
      <path d={`M1290.800 1034L${fmt(project(8, 0))}`} stroke="#9c3b4b" strokeWidth="2.800" />

      {/* 3D cursor and origin */}
      <circle cx="1248.500" cy="992.500" r="20" fill="none" stroke="#fff" strokeWidth="1.500" />
      <circle cx="1248.500" cy="992.500" r="20" fill="none" stroke="#e8261e" strokeWidth="1.500" strokeDasharray="7.800 7.900" />
      <path
        d="M1248 956V984M1249 1001V1028M1212.500 1000L1239 994.500M1258 990L1285 984.500M1233 977L1243 987M1253 997L1265 1008.500"
        stroke="#000"
        strokeWidth="2"
      />
      <circle cx="1248.500" cy="992.300" r="5.500" fill="#ff9e29" stroke="#333" strokeWidth="2" />

      {/* light */}
      <path d="M1599.500 458L1547.500 1158M1546 1160l1.500-4 1.500 4" stroke="#2c2c2c" strokeWidth="1.300" fill="none" />
      <g fill="none" stroke="#000" strokeWidth="1.700">
        <circle cx="1600" cy="454.500" r="14.300" />
        <path d="M1594.500 454.500l5.500-5.500 5.500 5.500-5.500 5.500z" />
        <circle cx="1600" cy="454.500" r="18" strokeDasharray="6.700 12.150" strokeDashoffset="2" />
        <circle cx="1600" cy="454.500" r="24" strokeDasharray="6.500 12.350" strokeDashoffset="4" />
      </g>

      {/* camera */}
      <g fill="none" stroke="#000" strokeWidth="1.900" strokeLinejoin="round">
        <path d="M575 901L745.500 925 731.500 1039.500 561 1011.500zM444 959L575 901M444 959L745.500 925M444 959L731.500 1039.500M444 959L561 1011.500" />
      </g>
      <path d="M669 833L720 911 602 894z" fill="#000" />

      {/* navigation gizmo */}
      <g fontFamily="Inter, sans-serif" fontWeight="700" fontSize="20" textAnchor="middle">
        <circle cx="2370" cy="447" r="14" fill="#5a3038" fillOpacity="0.600" stroke="#9c3847" strokeWidth="2" />
        <circle cx="2396.500" cy="530.500" r="14.500" fill="#3d4a60" stroke="#2f6db5" strokeWidth="2" />
        <path d="M2396 473L2395.500 416" stroke="#3182e0" strokeWidth="4.400" />
        <path d="M2396 473L2454 461" stroke="#70a41c" strokeWidth="4.400" />
        <path d="M2396 473L2422 499" stroke="#f63652" strokeWidth="4.400" />
        <circle cx="2337.500" cy="485.500" r="15.500" fill="#55682e" stroke="#80c610" strokeWidth="2" />
        <circle cx="2395.500" cy="416" r="16.500" fill="#2f83e3" />
        <circle cx="2454" cy="460.500" r="15.500" fill="#70a41c" />
        <circle cx="2422" cy="499" r="17" fill="#f63652" />
        <text x="2395.500" y="423" fill="#0c2444">Z</text>
        <text x="2454" y="468" fill="#1f2f08">Y</text>
        <text x="2422" y="506.500" fill="#4a0c16">X</text>
      </g>
    </SceneSvg>
  );
}

/* ------------------------------------------------------- editor type menu */

const EditorMenu = styled.div`
  position: absolute;
  left: 16px;
  top: 42px;
  width: 1427px;
  height: 470px;
  z-index: 5;
  display: flex;
  flex-direction: column;
  background: #181818;
  border: 2px solid #252525;
  border-radius: 0 0 10px 10px;
  box-shadow: 0 4px 10px rgba(0, 0, 0, 0.3);
`;

const MenuColumns = styled.div`
  display: grid;
  grid-template-columns: 415px 329px 348px 1fr;
  padding-left: 4px;
`;

const MenuTitle = styled.div`
  padding-left: 9px;
  height: 58px;
  line-height: 52px;
  color: #979797;
`;

const MenuRule = styled.div`
  height: 2px;
  margin: -1px 0 11px;
  background: #323232;
`;

const MenuColumn = styled.div<{ $w: number }>`
  width: ${(p) => p.$w}px;
  display: flex;
  flex-direction: column;
  gap: 8px;
`;

const MenuRow = styled.div<{ $active?: boolean }>`
  display: flex;
  align-items: center;
  height: 36px;
  padding: 0 8px 0 16px;
  border-radius: 6px;
  white-space: nowrap;
  color: ${(p) => (p.$active ? "#fff" : "#d9d9d9")};
  background: ${(p) => (p.$active ? "#4772b3" : "transparent")};
`;

const RowLabel = styled.span`
  margin-left: 14px;
`;

const Mnemonic = styled.span`
  text-decoration: underline;
  text-decoration-thickness: 2px;
  text-underline-offset: 3px;
  text-decoration-skip-ink: none;
`;

const Keys = styled.span<{ $c: string }>`
  display: flex;
  align-items: center;
  gap: 8px;
  margin-left: auto;
  font-variant-numeric: tabular-nums;
  color: ${(p) => p.$c};
`;

function ShiftKey({ c }: { c: string }) {
  return (
    <IconSvg width="18" height="20" viewBox="0 0 18 20" $c={c}>
      <path d="M9 1.500L17 10H13V18.500H5V10H1z" {...S} strokeWidth="1.800" />
    </IconSvg>
  );
}

type Entry = [icon: string, label: string, key?: string];

const columns: { title: string; width: number; rows: Entry[] }[] = [
  {
    title: "General",
    width: 401,
    rows: [
      ["view3d", "3_D_ Viewport", "F5"],
      ["image", "_I_mage Editor", "F10"],
      ["uv", "_U_V Editor", "F10"],
      ["compositor", "_C_ompositor", "F3"],
      ["texture", "_T_exture Node Editor", "F3"],
      ["geonodes", "_G_eometry Node Editor", "F3"],
      ["shader", "_S_hader Editor", "F3"],
      ["video", "_V_ideo Sequencer", "F8"],
      ["clip", "_M_ovie Clip Editor", "F2"],
    ],
  },
  {
    title: "Animation",
    width: 315,
    rows: [
      ["dope", "Dope S_h_eet", "F12"],
      ["timeline", "Timeline", "F12"],
      ["falloff", "Graph Editor", "F6"],
      ["drivers", "D_r_ivers", "F6"],
      ["nla", "_N_onlinear Animation"],
    ],
  },
  {
    title: "Scripting",
    width: 333,
    rows: [
      ["text", "Te_x_t Editor", "F11"],
      ["console", "_P_ython Console", "F4"],
      ["info", "Info"],
    ],
  },
  {
    title: "Data",
    width: 321,
    rows: [
      ["outliner", "_O_utliner", "F9"],
      ["properties", "Properties", "F7"],
      ["file", "_F_ile Browser", "F1"],
      ["asset", "_A_sset Browser", "F1"],
      ["sheet", "Spreadsheet"],
      ["prefs", "Preferences"],
    ],
  },
];

function Label({ text }: { text: string }) {
  const [before, key, after] = text.split("_");
  if (key === undefined) return <RowLabel>{text}</RowLabel>;
  return (
    <RowLabel>
      {before}
      <Mnemonic>{key}</Mnemonic>
      {after}
    </RowLabel>
  );
}

const Tooltip = styled.div`
  position: absolute;
  left: 268px;
  top: 168px;
  width: 475px;
  height: 96px;
  z-index: 6;
  display: flex;
  flex-direction: column;
  justify-content: center;
  gap: 1px;
  padding: 4px 0 0 24px;
  background: #1d1d1d;
  border: 2px solid #262626;
  border-radius: 8px;
`;

const TipLine = styled.div<{ $dim?: boolean }>`
  display: flex;
  align-items: center;
  gap: 9px;
  line-height: 35px;
  white-space: nowrap;
  color: ${(p) => (p.$dim ? "#a3a3a3" : "#d9d9d9")};
`;

/* ------------------------------------------------------------ right panels */

const SideColumn = styled.aside`
  display: flex;
  flex-direction: column;
  gap: 7px;
  width: 519px;
  flex: none;
`;

const Panel = styled.section<{ $h: number; $bg: string; $last?: boolean }>`
  height: ${(p) => p.$h}px;
  flex: none;
  overflow: hidden;
  background: ${(p) => p.$bg};
  border-radius: ${(p) => (p.$last ? "12px 12px 0 0" : "12px")};
`;

const PanelHeader = styled.div<{ $h: number; $pt: number }>`
  display: flex;
  align-items: flex-start;
  height: ${(p) => p.$h}px;
  padding: ${(p) => p.$pt}px 0 0 15px;
`;

const TreeRow = styled.div<{ $bg: string; $fg?: string }>`
  display: flex;
  align-items: center;
  height: 40px;
  background: ${(p) => p.$bg};
  color: ${(p) => p.$fg ?? "#bfbfbf"};
`;

const Slot = styled.div<{ $w: number; $pl?: number }>`
  display: flex;
  align-items: center;
  flex: none;
  width: ${(p) => p.$w}px;
  padding-left: ${(p) => p.$pl ?? 0}px;
  white-space: nowrap;
`;

const TreeName = styled.span<{ $w: number }>`
  flex: none;
  width: ${(p) => p.$w}px;
  padding-top: 4px;
  white-space: nowrap;
`;

const IconPlate = styled.div<{ $on?: string; $edge?: string }>`
  display: flex;
  align-items: center;
  justify-content: center;
  flex: none;
  width: 40px;
  height: 36px;
  border-radius: 9px;
  border: 2px solid ${(p) => p.$edge ?? "transparent"};
  background: ${(p) => p.$on ?? "transparent"};
`;

const Toggles = styled.div`
  display: flex;
  align-items: center;
  gap: 12px;
  margin-left: auto;
  padding: 0 25px 0 0;
`;

const Guide = styled.div`
  position: relative;
  &::before {
    content: "";
    position: absolute;
    left: 57px;
    top: 10px;
    width: 1px;
    height: 100px;
    background: #707070;
  }
`;

const TriSvg = ({ open }: { open?: boolean }) => (
  <IconSvg width="14" height="14" viewBox="0 0 14 14" $c="#b8b8b8" $mt={2}>
    <path d={open ? "M1.500 1H12.500L7 13z" : "M1.500 1.500V12.500L13 7z"} fill="currentColor" />
  </IconSvg>
);

const PropsBody = styled.div`
  display: flex;
  height: 450px;
`;

const PropTabs = styled.div`
  display: flex;
  flex-direction: column;
  width: 57px;
  flex: none;
  padding-top: 16px;
  background: #1d1d1d;
`;

const PropTab = styled.div<{ $h: number; $gap?: number }>`
  display: flex;
  align-items: center;
  justify-content: center;
  flex: none;
  height: ${(p) => p.$h}px;
  padding-left: 4px;
  margin-bottom: ${(p) => p.$gap ?? 0}px;
  border-bottom: ${(p) => (p.$gap ? "2px solid #181818" : "none")};
`;

const PropMain = styled.div`
  width: 433px;
  margin-left: 16px;
  flex: none;
  display: flex;
  flex-direction: column;
`;

const Crumb = styled.div`
  display: flex;
  align-items: center;
  flex: none;
  height: 72px;
  padding-left: 6px;
  color: #d9d9d9;
`;

const TransformPanel = styled.div`
  margin-top: 20px;
  height: 330px;
  padding: 0 13px;
  background: #3d3d3d;
  border-radius: 8px 8px 0 0;
  flex: none;
`;

const TransformHead = styled.div`
  display: flex;
  align-items: center;
  height: 54px;
  padding-left: 4px;
  margin-bottom: 14px;
`;

const FieldRow = styled.div<{ $first?: boolean; $gap?: boolean }>`
  display: flex;
  align-items: center;
  height: ${(p) => (p.$first ? 38 : 40)}px;
  padding-bottom: 2px;
  margin-top: ${(p) => (p.$gap ? 12 : 0)}px;
`;

const FieldLabel = styled.span`
  width: 139px;
  flex: none;
  text-align: right;
`;

const Field = styled.div<{ $top?: boolean; $bottom?: boolean }>`
  width: 163px;
  align-self: stretch;
  display: flex;
  align-items: center;
  justify-content: center;
  flex: none;
  margin: 0 7px 0 20px;
  color: #e6e6e6;
  background: #545454;
  border-radius: ${(p) => (p.$top ? "7px 0 0 0" : p.$bottom ? "0 0 0 7px" : "0")};
`;

const KeyDot = styled.i`
  width: 8px;
  height: 8px;
  margin-left: 23px;
  border-radius: 50%;
  background: #dcdcdc;
`;

const ScrollBar = styled.div`
  width: 6px;
  margin: 19px 0 0 5px;
  border-radius: 3px 3px 0 0;
  background: #3d3d3d;
`;

const tabs: [string, number][] = [
  ["Modeling", 137],
  ["Sculpting", 137],
  ["UV Editing", 148],
  ["Texture Paint", 179],
  ["Shading", 124],
  ["Animation", 144],
  ["Rendering", 145],
  ["Compositing", 170],
  ["Geometry Nodes", 217],
  ["Scripting", 131],
];

function Selector({ ml, icon, name, pin }: { ml: number; icon: string; name: string; pin?: boolean }) {
  return (
    <Group $ml={ml} $h={40} $mt={4} $line>
      <Seg $w={62} $sep $pad={7}>
        <Icon n={icon} />
        <Chevron ml={6} />
      </Seg>
      <Seg $w={239} $bg="#1d1d1d" $pad={14}>
        <Txt $w={184}>{name}</Txt>
        {pin && <Icon n="pin" c="#808080" ml={5} />}
      </Seg>
      <Seg $w={40} $bg="#545454" $center>
        <Icon n="copy" />
      </Seg>
      <Seg $w={39} $bg="#303030" $center>
        <Icon n="close" c="#5c5c5c" />
      </Seg>
    </Group>
  );
}

function ViewportHeader() {
  return (
    <ViewHeader>
      <Group $h={37}>
        <Seg $w={60} $bg="#456296" $pad={8}>
          <Icon n="view3d" c="#fff" />
          <Chevron ml={6} c="#fff" />
        </Seg>
      </Group>
      <Group $ml={14}>
        <Seg $w={216} $pad={8}>
          <Icon n="object" />
          <Txt $w={133} $ml={14}>Object Mode</Txt>
          <Chevron ml={15} />
        </Seg>
      </Group>
      <Slot $w={27} />
      <HeaderWord $w={81}>View</HeaderWord>
      <HeaderWord $w={96}>Select</HeaderWord>
      <HeaderWord $w={73}>Add</HeaderWord>
      <HeaderWord $w={411}>Object</HeaderWord>
      <Group>
        <Seg $w={156} $pad={8}>
          <Icon n="orient" />
          <Txt $w={65} $ml={15}>Global</Txt>
          <Chevron ml={22} />
        </Seg>
      </Group>
      <Group $ml={14}>
        <Seg $w={60} $pad={8}>
          <Icon n="pivot" />
          <Chevron ml={6} />
        </Seg>
      </Group>
      <Group $ml={14}>
        <Seg $w={37} $bg="#545454" $center>
          <Icon n="magnet" c="#a8a8a8" />
        </Seg>
        <Seg $w={63} $pad={7}>
          <Icon n="snapinc" s={26} />
          <Chevron ml={12} />
        </Seg>
      </Group>
      <Group $ml={14}>
        <Seg $w={37} $bg="#4f4f4f" $center>
          <Icon n="propedit" c="#b0b0b0" />
        </Seg>
        <Seg $w={62} $bg="#2e2e2e" $pad={9}>
          <Icon n="falloff" c="#8a8a8a" />
          <Chevron ml={7} c="#555" />
        </Seg>
      </Group>
      <Group $ml={530}>
        <Seg $w={60} $pad={4}>
          <Icon n="eyecursor" />
          <Chevron ml={10} />
        </Seg>
      </Group>
      <Group $ml={14}>
        <Seg $w={36} $bg="#4772b3" $center>
          <Icon n="gizmo" c="#fff" />
        </Seg>
        <Seg $w={40} $center>
          <Chevron />
        </Seg>
      </Group>
      <Group $ml={14}>
        <Seg $w={36} $bg="#4772b3" $center>
          <Icon n="overlay" c="#fff" />
        </Seg>
        <Seg $w={40} $center>
          <Chevron />
        </Seg>
      </Group>
      <Group $ml={14}>
        <Seg $w={36} $bg="#545454" $center>
          <Icon n="xray" />
        </Seg>
      </Group>
      <Group $ml={14}>
        {["wire", "solid", "material", "rendered"].map((n) => (
          <Seg key={n} $w={38} $bg={n === "solid" ? "#4772b3" : "#545454"} $sep $center>
            <Icon n={n} c={n === "solid" ? "#fff" : undefined} />
          </Seg>
        ))}
        <Seg $w={38} $center>
          <Chevron />
        </Seg>
      </Group>
    </ViewHeader>
  );
}

function Menu() {
  return (
    <EditorMenu>
      <MenuColumns>
        {columns.map((c) => (
          <MenuTitle key={c.title}>{c.title}</MenuTitle>
        ))}
      </MenuColumns>
      <MenuRule />
      <MenuColumns>
        {columns.map((c) => (
          <MenuColumn key={c.title} $w={c.width}>
            {c.rows.map(([icon, label, key]) => {
              const active = icon === "view3d";
              const keyColor = active ? "#a3b8d9" : "#7d7d7d";
              return (
                <MenuRow key={label} $active={active}>
                  <Icon n={icon} c={active ? "#fff" : "#dcdcdc"} />
                  <Label text={label} />
                  {key && (
                    <Keys $c={keyColor}>
                      <ShiftKey c={keyColor} />
                      {key}
                    </Keys>
                  )}
                </MenuRow>
              );
            })}
          </MenuColumn>
        ))}
      </MenuColumns>
    </EditorMenu>
  );
}

function Viewport() {
  return (
    <ViewportArea>
      <SceneDrawing />
      <ViewportHeader />
      <OptionsWrap>
        <Group>
          <Seg $w={127} $pad={14}>
            <Txt $w={80}>Options</Txt>
            <Chevron ml={15} />
          </Seg>
        </Group>
      </OptionsWrap>
      <SideTab>
        <IconSvg width="10" height="20" viewBox="0 0 10 20" $c="#9a9a9a">
          <path d="M8.500 2L2 10l6.500 8" {...S} strokeWidth="1.800" />
        </IconSvg>
      </SideTab>
      <Toolbar>
        <ToolGroup>
          <ToolButton>
            <Icon n="transform" s={52} box={52} />
          </ToolButton>
        </ToolGroup>
        <ToolGroup>
          <ToolButton $more>
            <Icon n="pen" s={50} box={52} />
          </ToolButton>
          <ToolButton>
            <Icon n="measure" s={54} box={52} ml={8} />
          </ToolButton>
        </ToolGroup>
        <ToolGroup>
          <ToolButton $more>
            <Icon n="addcube" s={50} box={52} />
          </ToolButton>
        </ToolGroup>
      </Toolbar>
      <NavStack>
        {["zoomin", "hand", "movie", "persp"].map((n) => (
          <NavButton key={n}>
            <Icon n={n} s={32} c="#dedede" />
          </NavButton>
        ))}
      </NavStack>
      <Menu />
      <Tooltip>
        <TipLine>Manipulate objects in a 3D environment.</TipLine>
        <TipLine $dim>
          Shortcut: <ShiftKey c="#a3a3a3" /> F5
        </TipLine>
      </Tooltip>
    </ViewportArea>
  );
}

const DARK = "#282828";
const LIGHT = "#2b2b2b";

function EyeCam({ check }: { check?: boolean }) {
  return (
    <Toggles>
      {check && <Icon n="check" />}
      <Icon n="eye" />
      <Icon n="photo" />
    </Toggles>
  );
}

function Outliner() {
  return (
    <Panel $h={498} $bg={DARK}>
      <PanelHeader $h={51} $pt={4}>
        <Group $h={40} $line>
          <Seg $w={60} $pad={7}>
            <Icon n="outliner" />
            <Chevron ml={6} />
          </Seg>
        </Group>
        <Group $h={40} $ml={11} $line>
          <Seg $w={60} $pad={7}>
            <Icon n="viewlayer" />
            <Chevron ml={6} />
          </Seg>
        </Group>
        <Group $h={40} $ml={32} $line>
          <Seg $w={226} $bg="#1d1d1d" $pad={7}>
            <Icon n="search" />
          </Seg>
        </Group>
        <Group $h={40} $ml={32} $line>
          <Seg $w={60} $pad={4}>
            <Icon n="filter" />
            <Chevron ml={10} />
          </Seg>
        </Group>
      </PanelHeader>
      <TreeRow $bg={DARK}>
        <Slot $w={87} $pl={45}>
          <Icon n="archive" c="#d8d8d8" />
        </Slot>
        <TreeName $w={200}>Scene Collection</TreeName>
      </TreeRow>
      <TreeRow $bg={LIGHT}>
        <Slot $w={79} $pl={51}>
          <TriSvg open />
        </Slot>
        <Slot $w={48}>
          <IconPlate $on="#505050" $edge="#686868">
            <Icon n="archive" />
          </IconPlate>
        </Slot>
        <TreeName $w={150}>Collection</TreeName>
        <EyeCam check />
      </TreeRow>
      <Guide>
        <TreeRow $bg={DARK}>
          <Slot $w={119} $pl={92}>
            <TriSvg />
          </Slot>
          <Slot $w={48} $pl={4}>
            <Icon n="movie" s={30} c="#c07f4a" />
          </Slot>
          <TreeName $w={120}>Camera</TreeName>
          <IconPlate $on="#545454" $edge="#6b6b6b">
            <Icon n="movieline" s={30} c="#18b495" />
          </IconPlate>
          <EyeCam />
        </TreeRow>
        <TreeRow $bg="#334d80" $fg="#ffaf29">
          <Slot $w={119} $pl={92}>
            <TriSvg />
          </Slot>
          <Slot $w={48}>
            <IconPlate $on="#5f7092" $edge="#7b89a6">
              <Icon n="mesh" c="#cd8d59" />
            </IconPlate>
          </Slot>
          <TreeName $w={102}>Cube</TreeName>
          <Icon n="meshdata" c="#18b495" />
          <EyeCam />
        </TreeRow>
        <TreeRow $bg={DARK}>
          <Slot $w={119} $pl={92}>
            <TriSvg />
          </Slot>
          <Slot $w={48} $pl={6}>
            <Icon n="bulb" c="#c07f4a" />
          </Slot>
          <TreeName $w={96}>Light</TreeName>
          <Icon n="lightdata" c="#18b495" />
          <EyeCam />
        </TreeRow>
      </Guide>
      {[LIGHT, DARK, LIGHT, DARK, LIGHT, DARK, LIGHT].map((bg, i) => (
        <TreeRow key={i} $bg={bg} />
      ))}
    </Panel>
  );
}

const propTabs: { icon: string; h: number; color: string; gap?: number }[] = [
  { icon: "tool", h: 57, color: "#a8a8a8", gap: 14 },
  { icon: "renderprop", h: 56, color: "#a8a8a8" },
  { icon: "output", h: 56, color: "#a8a8a8" },
  { icon: "viewlayer", h: 56, color: "#a8a8a8" },
  { icon: "scene", h: 56, color: "#a8a8a8" },
  { icon: "world", h: 58, color: "#b3575f", gap: 15 },
  { icon: "archiveline", h: 57, color: "#d8d8d8", gap: 14 },
];

const fields: [string, string][] = [
  ["Location X", "0 m"],
  ["Y", "0 m"],
  ["Z", "0 m"],
  ["Rotation X", "0°"],
  ["Y", "0°"],
  ["Z", "0°"],
];

function Properties() {
  return (
    <Panel $h={500} $bg="#303030" $last>
      <PanelHeader $h={50} $pt={5}>
        <Group $h={40} $line>
          <Seg $w={60} $pad={8}>
            <Icon n="properties" />
            <Chevron ml={6} />
          </Seg>
        </Group>
        <Group $h={40} $ml={57} $line>
          <Seg $w={226} $bg="#1d1d1d" $pad={8}>
            <Icon n="search" />
          </Seg>
        </Group>
        <Group $h={40} $ml={99} $line>
          <Seg $w={36} $center>
            <Chevron />
          </Seg>
        </Group>
      </PanelHeader>
      <PropsBody>
        <PropTabs>
          {propTabs.map((t) => (
            <PropTab key={t.icon} $h={t.h} $gap={t.gap}>
              <Icon n={t.icon} c={t.color} />
            </PropTab>
          ))}
        </PropTabs>
        <PropMain>
          <Crumb>
            <Icon n="object" />
            <Txt $w={347} $ml={18}>Cube</Txt>
            <Icon n="pin" c="#9a9a9a" />
          </Crumb>
          <Group $h={40} $mt={16} $line>
            <Seg $w={61} $sep $pad={8}>
              <Icon n="object" />
              <Chevron ml={6} />
            </Seg>
            <Seg $w={368} $bg="#1d1d1d" $pad={15}>
              Cube
            </Seg>
          </Group>
          <TransformPanel>
            <TransformHead>
              <Chevron w={17} c="#b0b0b0" />
              <Txt $w={350} $ml={10}>Transform</Txt>
              <Icon n="dots" />
            </TransformHead>
            {fields.map(([label, value], i) => (
              <FieldRow key={i} $first={i % 3 === 0} $gap={i === 3}>
                <FieldLabel>{label}</FieldLabel>
                <Field $top={i % 3 === 0} $bottom={i % 3 === 2}>
                  {value}
                </Field>
                <Icon n="lock" />
                <KeyDot />
              </FieldRow>
            ))}
          </TransformPanel>
        </PropMain>
        <ScrollBar />
      </PropsBody>
    </Panel>
  );
}

export default function App() {
  return (
    <Page>
      <Global />
      <Caption>
        <Word $size={108} $w={354} $track={2}>Editor</Word>
        <Word $size={108} $w={276} $track={2.4}>type</Word>
        <Word $size={95.5} $w={680} $jp>切り替えボタン</Word>
      </Caption>
      <Window>
        <TopBar>
          <Logo>
            <Icon n="blender" s={30} />
          </Logo>
          <MenuWord $w={66}>File</MenuWord>
          <MenuWord $w={71}>Edit</MenuWord>
          <MenuWord $w={105.5}>Render</MenuWord>
          <MenuWord $w={113.5}>Window</MenuWord>
          <MenuWord $w={97}>Help</MenuWord>
          <Tab $w={108} $active>Layout</Tab>
          {tabs.map(([name, w]) => (
            <Tab key={name} $w={w}>{name}</Tab>
          ))}
          <Tab $w={40}>
            <IconSvg width="18" height="18" viewBox="0 0 18 18" $c="#999" $ml={-8} $mt={8}>
              <path d="M9 0V18M0 9H18" {...S} strokeWidth="1.800" />
            </IconSvg>
          </Tab>
          <Selector ml={25} icon="scene" name="Scene" pin />
          <Selector ml={10} icon="viewlayer" name="ViewLayer" />
        </TopBar>
        <Body>
          <Viewport />
          <SideColumn>
            <Outliner />
            <Properties />
          </SideColumn>
        </Body>
      </Window>
      <ArrowLayer width="420" height="300" viewBox="0 0 420 300">
        <path
          d="M86 269.500L148.500 199 150 222.500C200 213 280 181 363 153C369 151 372 158 367 161L270 205C235 221 195 242 165 258L180 277z"
          fill="#ff2f6d"
        />
      </ArrowLayer>
    </Page>
  );
}
